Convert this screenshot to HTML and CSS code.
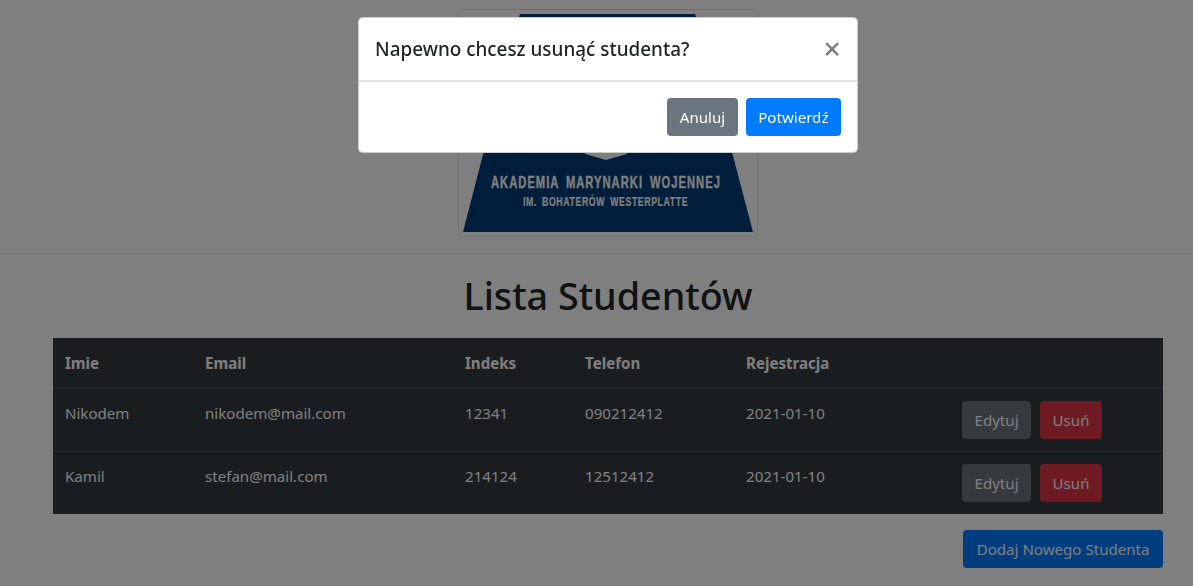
FILE: index.html
```html
<!DOCTYPE html>
<html lang="pl">
<head>
<meta charset="utf-8">
<title>Lista Studentów</title>
<link rel="stylesheet" href="styles.css">
</head>
<body>
<main class="page">
  <div class="logo-row">
    <div class="thumbnail">
      <svg class="logo" width="290" height="218" viewBox="0 0 290 218" aria-label="Akademia Marynarki Wojennej">
        <polygon points="57,0 232,0 234,5 290,218 0,218 55,5" fill="#003c78"/>
        <polygon points="122,134 164,134 164,140 143,146 122,140" fill="#fff"/>
        <text class="logo-big" transform="translate(28 174) scale(.7 1)" textLength="327" lengthAdjust="spacing">AKADEMIA MARYNARKI WOJENNEJ</text>
        <text class="logo-small" transform="translate(60 192) scale(.7 1)" textLength="235" lengthAdjust="spacing">IM. BOHATERÓW WESTERPLATTE</text>
      </svg>
    </div>
  </div>
  <hr class="divider">
  <h1 class="title">Lista Studentów</h1>
  <div class="table-wrap">
    <table class="students">
      <thead>
        <tr><th class="c-name">Imie</th><th class="c-mail">Email</th><th class="c-idx">Indeks</th><th class="c-tel">Telefon</th><th class="c-reg">Rejestracja</th><th></th></tr>
      </thead>
      <tbody>
        <tr><td>Nikodem</td><td>nikodem@mail.com</td><td>12341</td><td>090212412</td><td>2021-01-10</td><td><button class="btn btn-edit">Edytuj</button><button class="btn btn-del">Usuń</button></td></tr>
        <tr><td>Kamil</td><td>stefan@mail.com</td><td>214124</td><td>12512412</td><td>2021-01-10</td><td><button class="btn btn-edit">Edytuj</button><button class="btn btn-del">Usuń</button></td></tr>
      </tbody>
    </table>
  </div>
  <div class="add-row"><button class="btn btn-add">Dodaj Nowego Studenta</button></div>
</main>
<div class="backdrop"></div>
<div class="modal">
  <div class="modal-head">
    <h5 class="modal-title">Napewno chcesz usunąć studenta?</h5>
    <span class="close">×</span>
  </div>
  <div class="modal-foot">
    <button class="btn btn-cancel">Anuluj</button>
    <button class="btn btn-ok">Potwierdź</button>
  </div>
</div>
</body>
</html>
```
FILE: styles.css
```css
* { box-sizing: border-box; }
html, body { height: 100%; }
body {
  margin: 0;
  overflow: hidden;
  background: #fff;
  color: #212529;
  font-family: "Noto Sans", "Open Sans", sans-serif;
  font-size: 15.1px;
  line-height: 24px;
}
.page { padding-top: 9px; }
.logo-row { display: flex; justify-content: center; padding: 0 30px 0 53px; }
.thumbnail {
  display: flex;
  width: 300px;
  height: 228px;
  padding: 4px;
  background: #fff;
  border: 1px solid #dee2e6;
  border-radius: 4px;
}
.logo-big { font: bold 16px "Liberation Sans", sans-serif; fill: #fff; stroke: #fff; stroke-width: .3px; word-spacing: 4px; }
.logo-small { font: bold 12.5px "Liberation Sans", sans-serif; fill: #fff; stroke: #fff; stroke-width: .2px; word-spacing: 3px; }
.divider { margin: 16px 0 0; border: 0; border-top: 1px solid rgba(0,0,0,.1); }
.title {
  margin: 18px 0 18px;
  padding: 0 30px 0 53px;
  font-size: 37.7px;
  font-weight: 500;
  line-height: 48px;
  text-align: center;
}
.table-wrap { padding: 0 30px 0 53px; }
.students {
  width: 100%;
  border-collapse: collapse;
  table-layout: fixed;
  background: #343a40;
  color: #fff;
}
.students th {
  padding: 13px 12px 12px;
  text-align: left;
  vertical-align: top;
  font-weight: 700;
  border-bottom: 2px solid #454d55;
}
.students td {
  padding: 12px;
  vertical-align: top;
  border-top: 1px solid #454d55;
}
.c-name { width: 140px; }
.c-mail { width: 260px; }
.c-idx { width: 120px; }
.c-tel { width: 161px; }
.c-reg { width: 216px; }
.btn {
  display: inline-block;
  padding: 6px 11.5px;
  border: 1px solid transparent;
  border-radius: 4px;
  color: #fff;
  font: inherit;
  line-height: 24px;
}
.btn-edit { background: #6c757d; margin-right: 9px; }
.btn-del { background: #dc3545; }
.btn-add { background: #007bff; padding: 6px 12.5px; }
.btn-cancel { background: #6c757d; }
.btn-ok { background: #007bff; }
.add-row { display: flex; justify-content: flex-end; padding: 16px 30px 0 0; }
.backdrop { position: fixed; inset: 0; background: rgba(0,0,0,.5); }
.modal {
  position: fixed;
  top: 17px;
  left: 358px;
  width: 500px;
  background: #fff;
  border: 1px solid rgba(0,0,0,.2);
  border-radius: 5px;
}
.modal-head {
  display: flex;
  justify-content: space-between;
  padding: 16px;
  border-bottom: 2px solid #dee2e6;
}
.modal-title { margin: 0; font-size: 18.9px; font-weight: 500; line-height: 30px; }
.close { color: #000; opacity: .5; font-size: 31px; font-weight: 500; line-height: 28px; }
.modal-foot { display: flex; justify-content: flex-end; gap: 8px; padding: 16px; }
```
